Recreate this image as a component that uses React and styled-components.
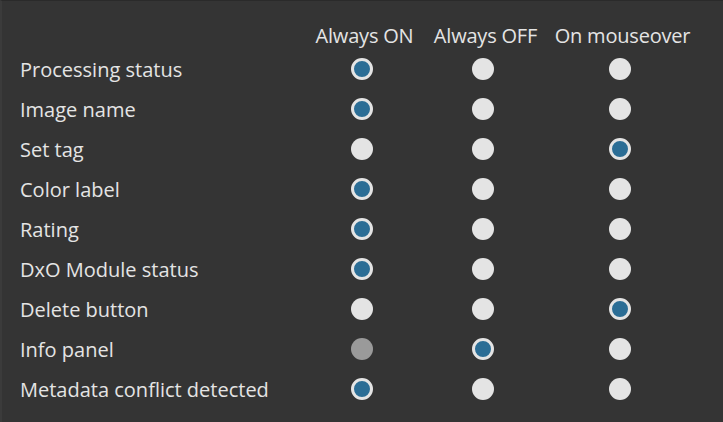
import React from "react";
import styled, { createGlobalStyle } from "styled-components";

const GlobalStyle = createGlobalStyle`
	html, body {
		margin: 0;
		padding: 0;
		background: #343434;
	}
	body {
		font-family: "Open Sans", "Noto Sans", sans-serif;
	}
`;

const columns = ["Always ON", "Always OFF", "On mouseover"];

// 0 = always on, 1 = always off, 2 = on mouseover; disabled marks the greyed dot
const rows = [
	{ label: "Processing status", value: 0 },
	{ label: "Image name", value: 0 },
	{ label: "Set tag", value: 2 },
	{ label: "Color label", value: 0 },
	{ label: "Rating", value: 0 },
	{ label: "DxO Module status", value: 0 },
	{ label: "Delete button", value: 2 },
	{ label: "Info panel", value: 1, disabled: 0 },
	{ label: "Metadata conflict detected", value: 0 },
];

export default function App() {
	return (
		<Panel>
			<GlobalStyle />
			<Grid>
				<Corner />
				{columns.map((c) => (
					<Heading key={c}>{c}</Heading>
				))}
				{rows.map((r) => (
					<React.Fragment key={r.label}>
						<Label>{r.label}</Label>
						{columns.map((c, i) => (
							<Cell key={c}>
								<Radio $checked={r.value === i} $disabled={r.disabled === i} />
							</Cell>
						))}
					</React.Fragment>
				))}
			</Grid>
		</Panel>
	);
}

const Panel = styled.div`
	box-sizing: border-box;
	width: 723px;
	height: 422px;
	background: #343434;
	border-top: 1px solid #2a2a2a;
	border-left: 2px solid #3b3b3b;
	padding: 20px 0 0 18px;
	color: #e4e4e4;
	overflow: hidden;
`;

const Grid = styled.div`
	display: grid;
	grid-template-columns: 282px 120px 122px 152px;
	grid-template-rows: 28px;
	grid-auto-rows: 40px;
`;

const Corner = styled.div``;

const Heading = styled.div`
	display: flex;
	align-items: center;
	justify-content: center;
	font-size: 20px;
	letter-spacing: -0.2px;
	white-space: nowrap;
	padding-left: 5px;
`;

const Label = styled.div`
	display: flex;
	align-items: center;
	font-size: 20px;
	white-space: nowrap;
`;

const Cell = styled.div`
	display: flex;
	align-items: center;
	justify-content: center;
`;

const Radio = styled.span`
	box-sizing: border-box;
	width: 22px;
	height: 22px;
	border-radius: 50%;
	background: ${(p) => (p.$checked ? "#2b6d95" : p.$disabled ? "#9a9a9a" : "#e4e4e4")};
	border: ${(p) => (p.$checked ? "3px solid #e4e4e4" : "none")};
`;
